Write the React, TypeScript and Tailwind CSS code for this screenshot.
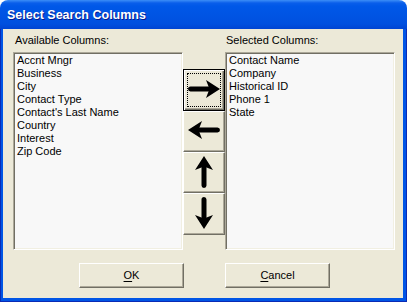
import React from "react";

type Dir = "right" | "left" | "up" | "down";

function Arrow({ dir }: { dir: Dir }) {
  const rot =
    dir === "right" ? "" : dir === "left" ? "rotate-180" : dir === "up" ? "-rotate-90" : "rotate-90";
  return (
    <svg width="32" height="18" viewBox="0 0 32 18" className={rot}>
      <path d="M2.5 6.5 H22 V11.5 H2.5 A2.5 2.5 0 0 1 2.5 6.5 Z" fill="#000" />
      <path d="M18 0 L32 9 L18 18 L21.5 9 Z" fill="#000" />
    </svg>
  );
}

function ArrowButton({ dir, h, def }: { dir: Dir; h: string; def?: boolean }) {
  const cls = def
    ? "border border-black shadow-[inset_1px_1px_#ffffff,inset_-1px_-1px_#716f64,inset_-2px_-2px_#aca899]"
    : "border border-t-white border-l-white border-b-[#716f64] border-r-[#716f64] shadow-[inset_-1px_-1px_#aca899]";
  return (
    <div className={`relative w-[42px] ${h} bg-[#ece9d8] flex items-center justify-center ${cls}`}>
      {def && <div className="absolute inset-[3px] border border-dotted border-black" />}
      <div className={dir === "right" || dir === "left" ? "-mt-[3px]" : "-mt-[2px]"}>
        <Arrow dir={dir} />
      </div>
    </div>
  );
}

function ListBox({ items }: { items: string[] }) {
  return (
    <div className="w-[170px] h-[198px] bg-[#f8f8f8] border border-t-[#aca899] border-l-[#aca899] border-b-white border-r-white shadow-[inset_1px_1px_#716f64,inset_-1px_-1px_#f1efe2] pl-[3px] pt-[1px]">
      {items.map((t) => (
        <div key={t} className="leading-[13px] h-[13px] whitespace-nowrap">
          {t}
        </div>
      ))}
    </div>
  );
}

function DlgButton({ children }: { children: React.ReactNode }) {
  return (
    <div className="w-[105px] h-[25px] bg-[#ece9d8] border border-t-white border-l-white border-b-[#716f64] border-r-[#716f64] shadow-[inset_-1px_-1px_#aca899] flex items-center justify-center leading-[13px]">
      {children}
    </div>
  );
}

export default function App() {
  return (
    <div className="w-[407px] h-[302px] flex flex-col bg-white font-['Liberation_Sans',Arial,sans-serif] text-[11px] text-black">
      <div className="h-[29px] shrink-0 rounded-t-[8px] bg-[linear-gradient(to_bottom,#3c8ef7_0px,#0a5eea_3px,#0058e8_6px,#0054e3_15px,#0050df_24px,#0044d2_29px)] pl-[7px] pt-[8px]">
        <span className="block text-white font-bold text-[12.5px] leading-[15px] [text-shadow:1px_1px_0_#0a1a8c]">
          Select Search Columns
        </span>
      </div>
      <div className="flex-1 flex bg-[#0a2bb5] pl-px pr-px pb-px">
        <div className="flex-1 flex flex-col bg-[#ece9d8] border-l-[2px] border-r-[3px] border-b-[3px] border-[#0055e5] pl-[10px] pr-[8px] pt-[5px] pb-[10px]">
          <div className="flex leading-[13px] h-[13px]">
            <div className="w-[212px] pl-[2px]">Available Columns:</div>
            <div className="pl-[1px]">Selected Columns:</div>
          </div>
          <div className="flex mt-[5px]">
            <ListBox
              items={[
                "Accnt Mngr",
                "Business",
                "City",
                "Contact Type",
                "Contact's Last Name",
                "Country",
                "Interest",
                "Zip Code",
              ]}
            />
            <div className="flex flex-col mt-[17px] self-start">
              <ArrowButton dir="right" h="h-[42px]" def />
              <ArrowButton dir="left" h="h-[41px]" />
              <ArrowButton dir="up" h="h-[41px]" />
              <ArrowButton dir="down" h="h-[42px]" />
            </div>
            <ListBox items={["Contact Name", "Company", "Historical ID", "Phone 1", "State"]} />
          </div>
          <div className="flex mt-[13px] pl-[66px] gap-[41px]">
            <DlgButton>
              <span>
                <span className="underline underline-offset-[2px]">O</span>K
              </span>
            </DlgButton>
            <DlgButton>
              <span>
                <span className="underline underline-offset-[2px]">C</span>ancel
              </span>
            </DlgButton>
          </div>
        </div>
      </div>
    </div>
  );
}
